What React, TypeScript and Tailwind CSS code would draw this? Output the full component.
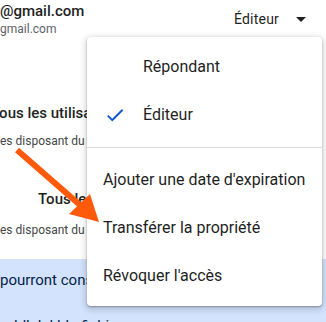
import React from "react";

const menuItems = ["Ajouter une date d'expiration", "Transférer la propriété", "Révoquer l'accès"];

export default function App() {
  return (
    <div className="relative w-[326px] h-[322px] overflow-hidden bg-white font-['Roboto',sans-serif] text-[#1f1f1f]">
      {/* page behind the menu */}
      <div className="flex justify-between pt-[2px]">
        <div>
          <div className="text-[15px] leading-[18px] font-medium">@gmail.com</div>
          <div className="text-[12px] leading-[14px] mt-[2px] text-[#5f6368]">gmail.com</div>
        </div>
        <div className="flex items-center mt-[5px] pr-[13px] h-[24px]">
          <span className="text-[14px] tracking-[0.2px]">Éditeur</span>
          <svg viewBox="0 0 24 24" className="w-[24px] h-[24px] ml-[10px] fill-[#1f1f1f]">
            <path d="M7 10l5 5 5-5z" />
          </svg>
        </div>
      </div>

      <div className="mt-[67px] -ml-[9px] text-[15px] leading-[20px] font-medium whitespace-nowrap">
        Tous les utilisateurs
      </div>
      <div className="mt-[10px] text-[12px] leading-[16px] text-[#444746] whitespace-nowrap">
        es disposant du lien
      </div>

      <div className="mt-[40px] pl-[38px] text-[15px] leading-[20px] font-medium whitespace-nowrap">
        Tous les
      </div>
      <div className="mt-[13px] text-[12px] leading-[16px] text-[#444746] whitespace-nowrap">
        es disposant du lien
      </div>

      <div className="mt-[21px] bg-[#d3e3fd] h-[80px] pt-[11px] text-[#041e49] text-[15px] leading-[20px] whitespace-nowrap">
        <div>pourront consulter</div>
        <div className="mt-[26px] pl-[14px]">ldlelal ldu fichier</div>
      </div>

      {/* role menu */}
      <div className="absolute left-[87px] top-[37px] w-[235px] bg-white rounded-[4px] py-[6px] shadow-[0_2px_6px_2px_rgba(0,0,0,0.15),0_1px_2px_rgba(0,0,0,0.3)]">
        <div className="h-12 flex items-center pl-[56px] text-[16px]">Répondant</div>
        <div className="h-12 flex items-center pl-[17px] text-[16px]">
          <svg viewBox="0 0 24 24" className="w-[22px] h-[22px] fill-[#0b57d0]">
            <path d="M9 16.17L4.83 12l-1.42 1.41L9 19 21 7l-1.41-1.41z" />
          </svg>
          <span className="ml-[17px]">Éditeur</span>
        </div>
        <div className="my-[8px] h-px bg-[#dadce0]" />
        {menuItems.map((item) => (
          <div key={item} className="h-12 flex items-center pl-4 text-[16px] whitespace-nowrap">
            {item}
          </div>
        ))}
      </div>

      {/* annotation arrow */}
      <svg className="absolute left-0 top-0 w-[326px] h-[322px] pointer-events-none" viewBox="0 0 326 322">
        <line x1="17" y1="150" x2="80" y2="205" stroke="#ff5a0a" strokeWidth="6" />
        <polygon points="99,222 69,214 90,194" fill="#ff5a0a" />
      </svg>
    </div>
  );
}
